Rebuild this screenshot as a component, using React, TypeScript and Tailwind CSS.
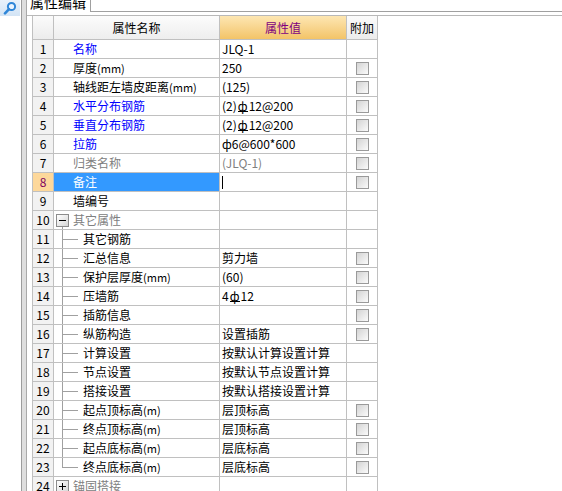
import type { ReactNode } from "react";

type Kind = "top" | "child" | "last" | "minus" | "plus";

interface Row {
  name: ReactNode;
  value?: ReactNode;
  tone?: "blue" | "gray";
  valueGray?: boolean;
  check?: boolean;
  kind?: Kind;
  selected?: boolean;
}

// HRB335 rebar sign: phi with a bar underneath
const Hrb = () => <span className="inline-block border-b border-black leading-[11px] mx-[1px]">ф</span>;
const unit = (u: string) => <span className="text-[11px]">({u})</span>;

const rows: Row[] = [
  { name: "名称", value: "JLQ-1", tone: "blue" },
  { name: <>厚度{unit("mm")}</>, value: "250", check: true },
  { name: <>轴线距左墙皮距离{unit("mm")}</>, value: "(125)", check: true },
  { name: "水平分布钢筋", value: <>(2)<Hrb />12@200</>, tone: "blue", check: true },
  { name: "垂直分布钢筋", value: <>(2)<Hrb />12@200</>, tone: "blue", check: true },
  { name: "拉筋", value: "ф6@600*600", tone: "blue", check: true },
  { name: "归类名称", value: "(JLQ-1)", tone: "gray", valueGray: true, check: true },
  { name: "备注", value: <span className="inline-block w-px h-[13px] bg-black" />, check: true, selected: true },
  { name: "墙编号" },
  { name: "其它属性", tone: "gray", kind: "minus" },
  { name: "其它钢筋", kind: "child" },
  { name: "汇总信息", value: "剪力墙", kind: "child", check: true },
  { name: <>保护层厚度{unit("mm")}</>, value: "(60)", kind: "child", check: true },
  { name: "压墙筋", value: <>4<Hrb />12</>, kind: "child", check: true },
  { name: "插筋信息", kind: "child", check: true },
  { name: "纵筋构造", value: "设置插筋", kind: "child", check: true },
  { name: "计算设置", value: "按默认计算设置计算", kind: "child" },
  { name: "节点设置", value: "按默认节点设置计算", kind: "child" },
  { name: "搭接设置", value: "按默认搭接设置计算", kind: "child" },
  { name: <>起点顶标高{unit("m")}</>, value: "层顶标高", kind: "child", check: true },
  { name: <>终点顶标高{unit("m")}</>, value: "层顶标高", kind: "child", check: true },
  { name: <>起点底标高{unit("m")}</>, value: "层底标高", kind: "child", check: true },
  { name: <>终点底标高{unit("m")}</>, value: "层底标高", kind: "last", check: true },
  { name: "锚固搭接", tone: "gray", kind: "plus" },
];

function Expander({ open }: { open: boolean }) {
  return (
    <div className="w-[13px] flex flex-col items-center">
      <div className="flex-1" />
      <div className="relative w-[13px] h-[13px] border border-[#8c8c8c] bg-linear-to-br from-white to-[#d6d6d6]">
        <div className="absolute left-[2px] top-[5px] w-[7px] h-px bg-black" />
        {!open && <div className="absolute left-[5px] top-[2px] w-px h-[7px] bg-black" />}
      </div>
      <div className={`flex-1 w-px ${open ? "bg-[#a0a0a0]" : ""}`} />
    </div>
  );
}

function Check() {
  return (
    <div className="w-[13px] h-[13px] border border-[#9a9a9a] bg-linear-to-br from-[#d4d4d4] to-[#fbfbfb]" />
  );
}

function NameCell({ row }: { row: Row }) {
  const kind = row.kind ?? "top";
  const color = row.selected
    ? "text-white"
    : row.tone === "blue"
      ? "text-[#0000ff]"
      : row.tone === "gray"
        ? "text-[#808080]"
        : "text-black";
  return (
    <div className={`flex items-stretch h-[19px] border-r border-b border-[#c0c0c0] ${row.selected ? "bg-[#3399ff]" : ""} ${color}`}>
      {kind === "top" && <div className="w-[19px]" />}
      {(kind === "child" || kind === "last") && (
        <>
          <div className="w-[8px]" />
          <div className="w-[16px] flex flex-col">
            <div className="flex-1 border-l border-b border-[#a0a0a0]" />
            <div className={`flex-1 ${kind === "last" ? "" : "border-l border-[#a0a0a0]"}`} />
          </div>
          <div className="w-[5px]" />
        </>
      )}
      {(kind === "minus" || kind === "plus") && (
        <>
          <div className="w-[2px]" />
          <Expander open={kind === "minus"} />
          <div className="w-[4px]" />
        </>
      )}
      <span className="self-center whitespace-nowrap">{row.name}</span>
    </div>
  );
}

export default function App() {
  return (
    <div className="flex w-[562px] h-[491px] overflow-hidden bg-white font-['Noto_Sans_CJK_SC',sans-serif] text-[12px] leading-none">
      {/* left tool strip */}
      <div className="w-[21px] shrink-0">
        <div className="w-[20px] h-[16px] bg-linear-to-b from-[#e8f1fb] to-[#d3e4f5] flex items-center justify-center">
          <svg width="14" height="14" viewBox="0 0 14 14">
            <circle cx="8.5" cy="5.5" r="3.6" fill="#eaf4ff" stroke="#2f86d8" strokeWidth="2" />
            <line x1="6" y1="8.2" x2="2" y2="12.4" stroke="#2f86d8" strokeWidth="2.6" strokeLinecap="round" />
          </svg>
        </div>
      </div>
      <div className="w-[6px] shrink-0 border-l border-r border-l-[#9c9c9c] border-r-[#a9a9a9] bg-[#dedede]" />

      <div className="flex-1 flex flex-col min-w-0">
        {/* tab bar */}
        <div className="relative h-[16px] shrink-0">
          <div className="flex h-[12px]">
            <div className="w-[64px] h-[12px] border-r border-[#a0a0a0] overflow-hidden">
              <div className="pl-[3px] -mt-[5px] text-[14px] leading-[14px] text-black whitespace-nowrap">属性编辑</div>
            </div>
            <div className="flex-1 border-b border-[#a0a0a0]" />
          </div>
          <div className="absolute left-0 right-0 top-[15px] h-px bg-[#b8b8b8]" />
        </div>

        {/* property grid */}
        <div className="pl-[5px]">
          <div className="w-[346px] border-l border-[#c0c0c0]">
            <div className="grid grid-cols-[21px_166px_127px_31px]">
              <div className="h-[24px] border-r border-b border-[#c0c0c0] bg-linear-to-b from-[#fbfbfb] to-[#ececec]" />
              <div className="h-[24px] flex items-center justify-center border-r border-b border-[#c0c0c0] bg-linear-to-b from-[#fcfcfc] to-[#eeeeee] text-black">
                属性名称
              </div>
              <div className="h-[24px] flex items-center justify-center border-r border-b border-[#c0c0c0] bg-linear-to-b from-[#fde6b2] to-[#f3c467] text-[#800080]">
                属性值
              </div>
              <div className="h-[24px] flex items-center justify-center border-r border-b border-[#c0c0c0] bg-linear-to-b from-[#fbfbfb] to-[#ececec] text-black">
                附加
              </div>

              {rows.map((row, i) => (
                <div key={i} className="contents">
                  <div
                    className={`h-[19px] flex items-center justify-center border-r border-b border-[#c0c0c0] ${
                      row.selected ? "bg-[#fdd89b] text-[#800060]" : "bg-[#f2f2f2] text-black"
                    }`}
                  >
                    {i + 1}
                  </div>
                  <NameCell row={row} />
                  <div
                    className={`h-[19px] flex items-center pl-[2px] whitespace-nowrap border-r border-b border-[#c0c0c0] ${
                      row.valueGray ? "text-[#808080]" : "text-black"
                    }`}
                  >
                    {row.value}
                  </div>
                  <div className="h-[19px] flex items-center justify-center border-r border-b border-[#c0c0c0]">
                    {row.check && <Check />}
                  </div>
                </div>
              ))}
            </div>
          </div>
        </div>
      </div>
    </div>
  );
}
